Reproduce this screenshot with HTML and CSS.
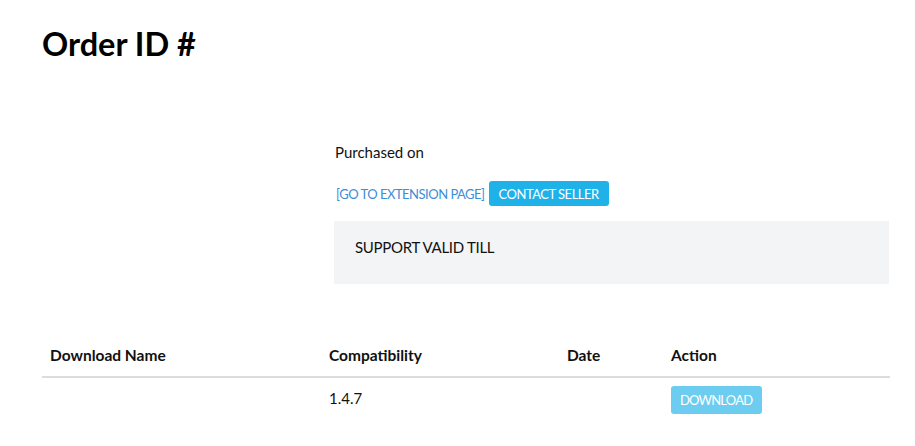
FILE: index.html
```html
<!DOCTYPE html>
<html>
<head>
<meta charset="utf-8">
<link rel="stylesheet" href="styles.css">
</head>
<body>
<div class="page">
  <h1 class="title">Order ID #</h1>
  <div class="summary">
    <div class="spacer"></div>
    <div class="details">
      <p class="purchased">Purchased on</p>
      <div class="links">
        <a class="ext-link" href="#">[GO TO EXTENSION PAGE]</a>
        <a class="btn btn-contact" href="#">CONTACT SELLER</a>
      </div>
      <div class="support">SUPPORT VALID TILL</div>
    </div>
  </div>
  <table class="downloads">
    <thead>
      <tr>
        <th class="c-name">Download Name</th>
        <th class="c-compat">Compatibility</th>
        <th class="c-date">Date</th>
        <th class="c-action">Action</th>
      </tr>
    </thead>
    <tbody>
      <tr>
        <td></td>
        <td class="version">1.4.7</td>
        <td></td>
        <td><a class="btn btn-download" href="#">DOWNLOAD</a></td>
      </tr>
    </tbody>
  </table>
</div>
</body>
</html>
```
FILE: styles.css
```css
* { box-sizing: border-box; }
body {
  margin: 0;
  background: #fff;
  color: #111;
  font-family: Lato, "Open Sans", sans-serif;
  font-size: 15px;
}
.page {
  padding: 22px 26px 0 42px;
}
.title {
  margin: 0;
  font-size: 32.5px;
  font-weight: 700;
  line-height: 44px;
  color: #000;
}
.summary {
  display: grid;
  grid-template-columns: 292px 1fr;
  margin-top: 75px;
}
.purchased {
  margin: 0;
  line-height: 22px;
  padding-left: 1px;
}
.links {
  display: flex;
  align-items: center;
  gap: 4px;
  margin-top: 18px;
}
.ext-link {
  color: #3d8ed6;
  text-decoration: none;
  font-size: 13px;
  letter-spacing: -0.5px;
  padding-left: 2px;
}
.btn {
  display: inline-block;
  text-decoration: none;
  color: #fff;
  border-radius: 3px;
  font-size: 13px;
  letter-spacing: -0.5px;
}
.btn-contact {
  background: #1fb2e8;
  padding: 4px 10px 3px;
  line-height: 18px;
}
.support {
  margin-top: 15px;
  background: #f3f4f6;
  height: 63px;
  padding: 17px 20px 16px 21px;
  line-height: 18px;
  letter-spacing: -0.3px;
}
.downloads {
  margin-top: 52px;
  width: 848px;
  border-collapse: collapse;
}
.downloads th {
  text-align: left;
  font-weight: 700;
  font-size: 15.5px;
  padding: 8px 8px 10px;
  line-height: 22px;
  border-bottom: 2px solid #dcdcdc;
}
.downloads td {
  padding: 8px 8px;
  vertical-align: top;
  line-height: 20px;
}
.version { padding-top: 10px !important; }
.c-name { width: 279px; }
.c-compat { width: 238px; }
.c-date { width: 104px; }
.btn-download {
  background: #6dcdf0;
  font-size: 13px;
  letter-spacing: -0.8px;
  padding: 5px 10px 5px 9px;
  line-height: 18px;
}
```
